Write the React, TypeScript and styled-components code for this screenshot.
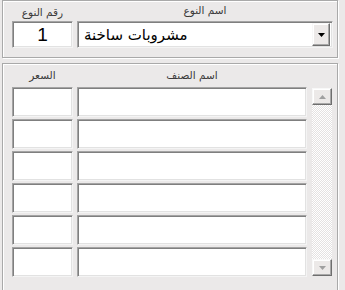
import React from "react";
import styled, { createGlobalStyle } from "styled-components";

const Global = createGlobalStyle`
  html, body { margin: 0; padding: 0; background: #ebe9e9; }
  body { font-family: "DejaVu Sans", "Liberation Sans", sans-serif; }
`;

const Screen = styled.div`
  width: 345px;
  height: 290px;
  overflow: hidden;
  background: #ebe9e9;
  display: flex;
  flex-direction: column;
  gap: 5px;
  padding-left: 2px;
  box-sizing: border-box;
`;

const Panel = styled.div<{ $h: number }>`
  width: 336px;
  height: ${(p) => p.$h}px;
  box-sizing: border-box;
  border: 1px solid #a9a9a9;
  box-shadow: inset 1px 1px 0 #ffffff, 1px 1px 0 #ffffff;
  flex-shrink: 0;
`;

const TopGrid = styled.div`
  display: grid;
  grid-template-columns: 61px 256px;
  grid-template-rows: 20px 27px;
  column-gap: 4px;
  padding-left: 9px;
`;

const Label = styled.div<{ $pt?: number }>`
  font-family: "DejaVu Sans", sans-serif;
  font-size: 10.5px;
  color: #3a3a3a;
  text-align: center;
  direction: rtl;
  padding-top: ${(p) => p.$pt ?? 4}px;
  line-height: 12px;
  white-space: nowrap;
`;

const Inset = styled.div`
  box-sizing: border-box;
  background: #ffffff;
  border: 1px solid;
  border-color: #a4a4a4 #f4f4f4 #f4f4f4 #a4a4a4;
  box-shadow: inset 1px 1px 0 #7f7f7f, inset -1px -1px 0 #e2e2e2;
`;

const NumberBox = styled(Inset)`
  display: flex;
  align-items: center;
  justify-content: center;
  font-family: "Liberation Sans", sans-serif;
  font-size: 19px;
  color: #000;
  padding-top: 1px;
`;

const Combo = styled(Inset)`
  display: flex;
  align-items: center;
  justify-content: space-between;
  padding: 2px 2px 2px 6px;
`;

const ComboText = styled.span`
  direction: rtl;
  font-family: "DejaVu Sans", sans-serif;
  font-size: 15px;
  color: #000;
  padding-top: 1px;
`;

const RaisedButton = styled.div<{ $w: number; $h: number }>`
  width: ${(p) => p.$w}px;
  height: ${(p) => p.$h}px;
  box-sizing: border-box;
  background: #ece9e8;
  border: 1px solid;
  border-color: #f8f8f8 #6e6e6e #6e6e6e #f8f8f8;
  box-shadow: inset -1px -1px 0 #a8a8a8, inset 1px 1px 0 #ffffff;
  display: flex;
  align-items: center;
  justify-content: center;
  flex-shrink: 0;
`;

const LowerBody = styled.div`
  display: flex;
  align-items: flex-start;
  padding-left: 9px;
  gap: 5px;
`;

const ListGrid = styled.div`
  display: grid;
  grid-template-columns: 61px 230px;
  grid-template-rows: 21px;
  grid-auto-rows: 30px;
  column-gap: 4px;
  row-gap: 2px;
`;

const HeadLabel = styled(Label)`
  padding-top: 5px;
`;

const Scrollbar = styled.div`
  margin-top: 24px;
  width: 20px;
  height: 188px;
  display: flex;
  flex-direction: column;
  justify-content: space-between;
  background-color: #ffffff;
  background-image: repeating-conic-gradient(#e4e2e2 0% 25%, #ffffff 0% 50%);
  background-size: 2px 2px;
`;

const Arrow = ({ dir, color }: { dir: "up" | "down"; color: string }) => (
  <svg width="7" height="4" viewBox="0 0 7 4">
    {dir === "down" ? (
      <polygon points="0,0 7,0 3.5,4" fill={color} />
    ) : (
      <polygon points="0,4 7,4 3.5,0" fill={color} />
    )}
  </svg>
);

const rows = [0, 1, 2, 3, 4, 5];

export default function App() {
  return (
    <>
      <Global />
      <Screen>
        <Panel $h={58}>
          <TopGrid>
            <Label $pt={5}>رقم النوع</Label>
            <Label $pt={3}>اسم النوع</Label>
            <NumberBox>1</NumberBox>
            <Combo>
              <ComboText>مشروبات ساخنة</ComboText>
              <RaisedButton $w={18} $h={23}>
                <Arrow dir="down" color="#000" />
              </RaisedButton>
            </Combo>
          </TopGrid>
        </Panel>
        <Panel $h={240}>
          <LowerBody>
            <ListGrid>
              <HeadLabel>السعر</HeadLabel>
              <HeadLabel>اسم الصنف</HeadLabel>
              {rows.map((r) => (
                <React.Fragment key={r}>
                  <Inset />
                  <Inset />
                </React.Fragment>
              ))}
            </ListGrid>
            <Scrollbar>
              <RaisedButton $w={20} $h={17}>
                <Arrow dir="up" color="#a0a0a0" />
              </RaisedButton>
              <RaisedButton $w={20} $h={17}>
                <Arrow dir="down" color="#a0a0a0" />
              </RaisedButton>
            </Scrollbar>
          </LowerBody>
        </Panel>
      </Screen>
    </>
  );
}
